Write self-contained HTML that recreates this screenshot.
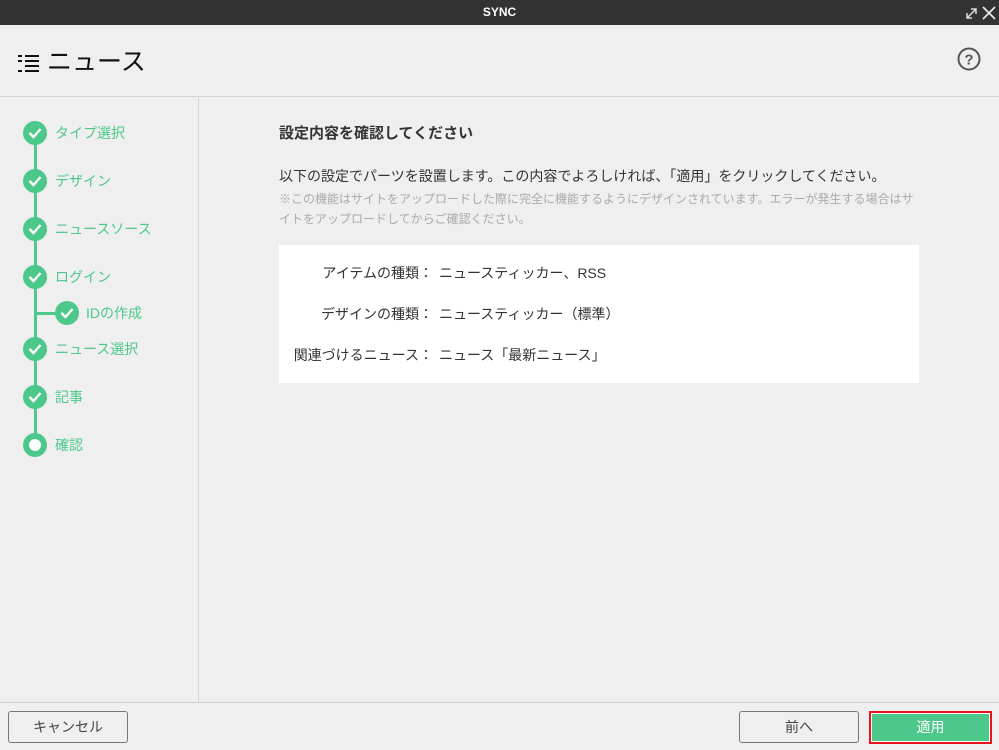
<!DOCTYPE html>
<html><head><meta charset="utf-8"><style>
*{margin:0;padding:0;box-sizing:border-box}
body{width:999px;height:750px;background:#efefef;font-family:"Liberation Sans","Noto Sans CJK JP",sans-serif;position:relative;overflow:hidden;color:#333}
.tb{position:absolute;left:0;top:0;width:999px;height:25px;background:#333;color:#fff;font-size:12px;font-weight:bold;text-align:center;line-height:25px}
.hd{position:absolute;left:0;top:25px;width:999px;height:72px;border-bottom:1px solid #d4d4d4}
.side{position:absolute;left:0;top:98px;width:199px;height:604px;border-right:1px solid #d4d4d4}
.ft{position:absolute;left:0;top:702px;width:999px;height:48px;border-top:1px solid #d0d0d0}
.c{position:absolute;width:24px;height:24px;border-radius:50%;background:#4cc98a}
.c svg{position:absolute;left:5px;top:6px}
.lbl{position:absolute;font-size:14px;color:#4cc98a;line-height:20px}
.btn{position:absolute;height:32px;border:1px solid #777;border-radius:3px;font-size:14px;text-align:center;line-height:30px;color:#444;background:#efefef}
</style></head><body>
<div class="tb">SYNC</div>
<svg style="position:absolute;left:965px;top:7px" width="13" height="13" viewBox="0 0 13 13"><path d="M2 11L11 2M6 2h5v5M2 6v5h5" stroke="#ddd" stroke-width="1.5" fill="none"/></svg>
<svg style="position:absolute;left:982px;top:6px" width="14" height="14" viewBox="0 0 14 14"><path d="M1 1L13 13M13 1L1 13" stroke="#eee" stroke-width="1.6"/></svg>
<div class="hd">
<svg style="position:absolute;left:18px;top:30px" width="22" height="17" viewBox="0 0 22 17"><g fill="#111"><rect x="0" y="0" width="4" height="2"/><rect x="7" y="0" width="14" height="2"/><rect x="0" y="5" width="4" height="2"/><rect x="7" y="5" width="14" height="2"/><rect x="7" y="10" width="14" height="2"/><rect x="0" y="15" width="4" height="2"/><rect x="7" y="15" width="14" height="2"/></g></svg>
<div style="position:absolute;left:47px;top:20px;font-size:25px;color:#111;line-height:34px">ニュース</div>
<svg style="position:absolute;left:957px;top:22px" width="24" height="24" viewBox="0 0 24 24"><circle cx="12" cy="12" r="10.5" stroke="#555" stroke-width="2" fill="none"/><text x="12" y="17.5" font-size="15" font-weight="bold" text-anchor="middle" fill="#555" font-family="Liberation Sans">?</text></svg>
</div>
<div class="side">
<div style="position:absolute;left:34px;top:35px;width:3px;height:312px;background:#4cc98a"></div>
<div style="position:absolute;left:35px;top:214px;width:25px;height:3px;background:#4cc98a"></div>
</div>
<div id="steps"></div>
<script></script>
<!-- steps -->
<div class="c" style="left:23px;top:121px"><svg width="14" height="12" viewBox="0 0 14 12"><path d="M1.5 6l4 4 7-8" stroke="#fff" stroke-width="2.4" fill="none"/></svg></div><div class="lbl" style="left:55px;top:123px">タイプ選択</div>
<div class="c" style="left:23px;top:169px"><svg width="14" height="12" viewBox="0 0 14 12"><path d="M1.5 6l4 4 7-8" stroke="#fff" stroke-width="2.4" fill="none"/></svg></div><div class="lbl" style="left:55px;top:171px">デザイン</div>
<div class="c" style="left:23px;top:217px"><svg width="14" height="12" viewBox="0 0 14 12"><path d="M1.5 6l4 4 7-8" stroke="#fff" stroke-width="2.4" fill="none"/></svg></div><div class="lbl" style="left:55px;top:219px">ニュースソース</div>
<div class="c" style="left:23px;top:265px"><svg width="14" height="12" viewBox="0 0 14 12"><path d="M1.5 6l4 4 7-8" stroke="#fff" stroke-width="2.4" fill="none"/></svg></div><div class="lbl" style="left:55px;top:267px">ログイン</div>
<div class="c" style="left:55px;top:301px"><svg width="14" height="12" viewBox="0 0 14 12"><path d="M1.5 6l4 4 7-8" stroke="#fff" stroke-width="2.4" fill="none"/></svg></div><div class="lbl" style="left:86px;top:303px">IDの作成</div>
<div class="c" style="left:23px;top:337px"><svg width="14" height="12" viewBox="0 0 14 12"><path d="M1.5 6l4 4 7-8" stroke="#fff" stroke-width="2.4" fill="none"/></svg></div><div class="lbl" style="left:55px;top:339px">ニュース選択</div>
<div class="c" style="left:23px;top:385px"><svg width="14" height="12" viewBox="0 0 14 12"><path d="M1.5 6l4 4 7-8" stroke="#fff" stroke-width="2.4" fill="none"/></svg></div><div class="lbl" style="left:55px;top:387px">記事</div>
<div class="c" style="left:23px;top:433px"><div style="position:absolute;left:6px;top:6px;width:12px;height:12px;border-radius:50%;background:#fff"></div></div><div class="lbl" style="left:55px;top:435px">確認</div>

<div style="position:absolute;left:279px;top:123px;font-size:15px;font-weight:bold;color:#333;line-height:22px">設定内容を確認してください</div>
<div style="position:absolute;left:279px;top:166px;font-size:14px;color:#333;line-height:20px">以下の設定でパーツを設置します。この内容でよろしければ、「適用」をクリックしてください。</div>
<div style="position:absolute;left:279px;top:189px;width:645px;font-size:12px;color:#aaa;line-height:20px">※この機能はサイトをアップロードした際に完全に機能するようにデザインされています。エラーが発生する場合はサイトをアップロードしてからご確認ください。</div>
<div style="position:absolute;left:279px;top:245px;width:640px;height:138px;background:#fff;font-size:14px;color:#333;line-height:20px">
<div style="position:absolute;right:486px;top:18px;white-space:nowrap">アイテムの種類：</div><div style="position:absolute;left:160px;top:18px;white-space:nowrap">ニュースティッカー、RSS</div>
<div style="position:absolute;right:486px;top:59px;white-space:nowrap">デザインの種類：</div><div style="position:absolute;left:160px;top:59px;white-space:nowrap">ニュースティッカー（標準）</div>
<div style="position:absolute;right:486px;top:100px;white-space:nowrap">関連づけるニュース：</div><div style="position:absolute;left:160px;top:100px;white-space:nowrap">ニュース「最新ニュース」</div>
</div>
<div class="ft"></div>
<div class="btn" style="left:8px;top:711px;width:120px">キャンセル</div>
<div class="btn" style="left:739px;top:711px;width:120px">前へ</div>
<div style="position:absolute;left:869px;top:711px;width:123px;height:33px;border:2px solid #e8131b;padding:1px;background:#fff"><div style="width:100%;height:100%;background:#4cc98a;color:#fff;font-size:14px;text-align:center;line-height:27px">適用</div></div>
</body></html>
